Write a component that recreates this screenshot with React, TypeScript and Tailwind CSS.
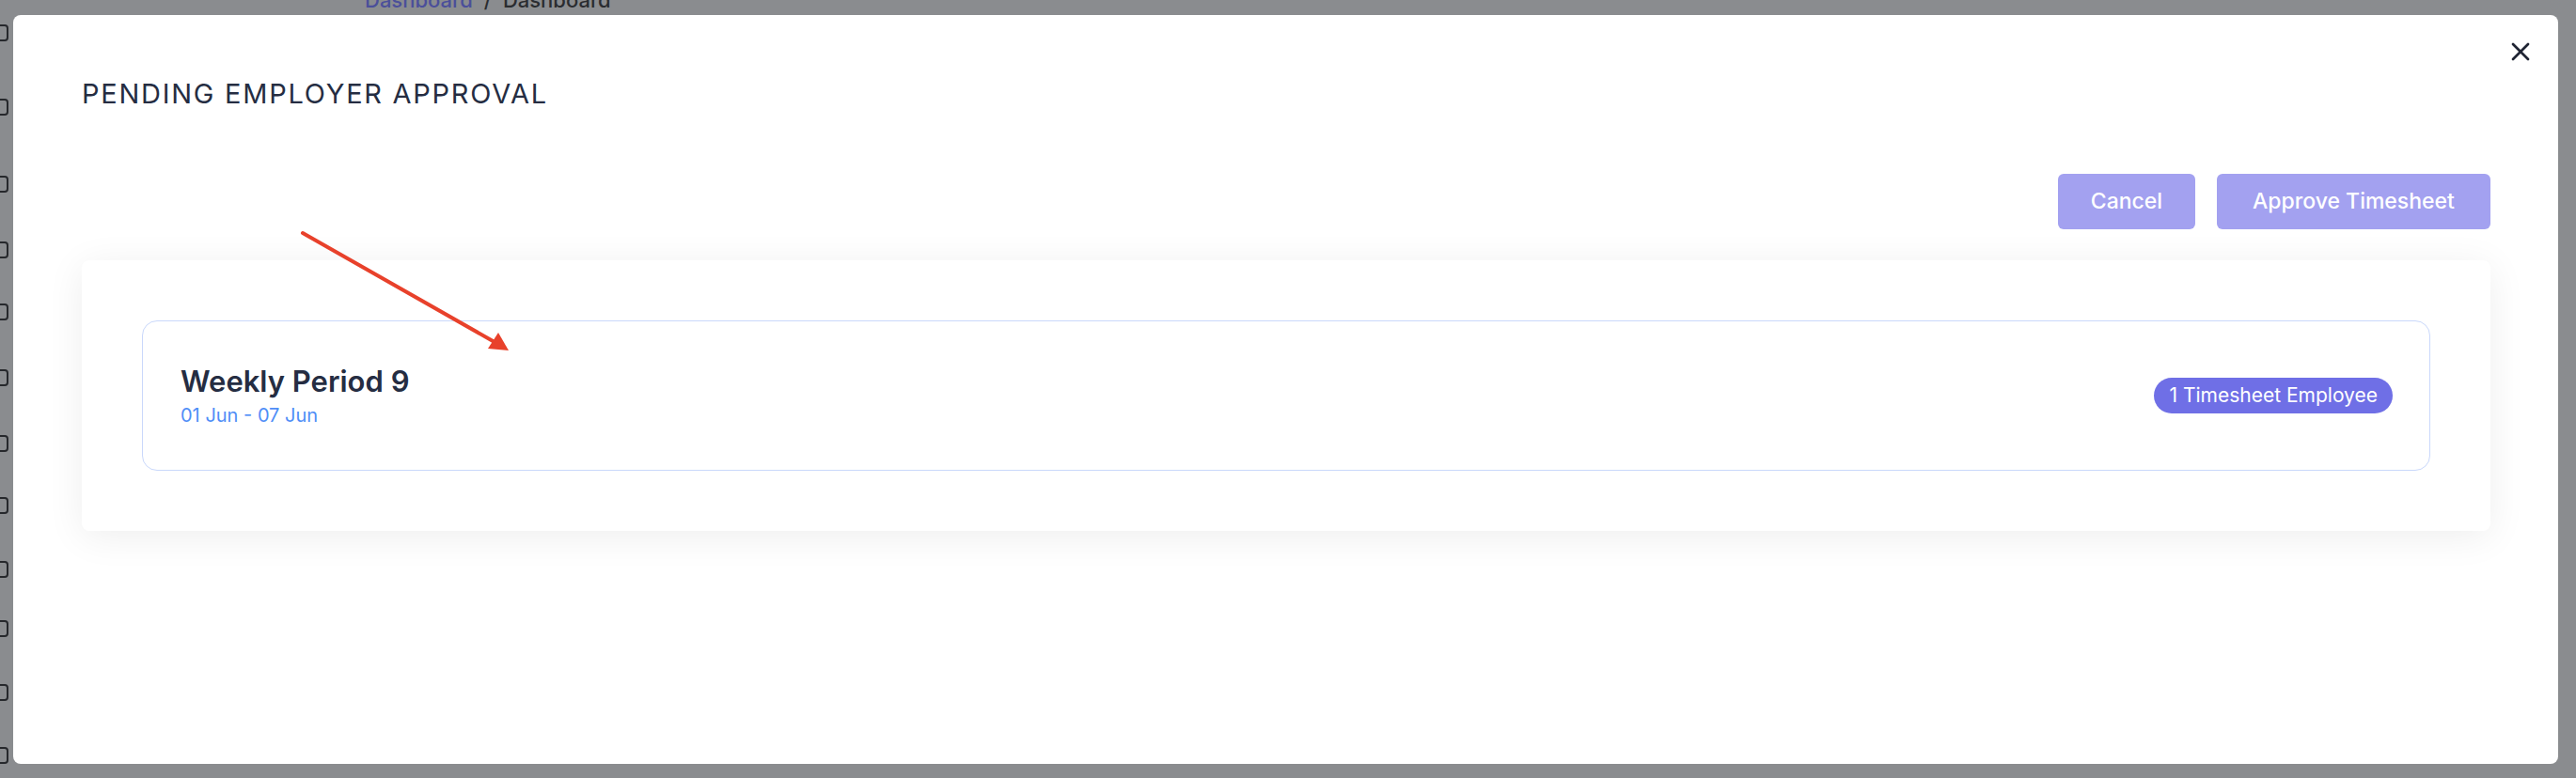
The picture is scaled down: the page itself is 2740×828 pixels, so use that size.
import { X } from 'lucide-react'

const sidebarIcons = [35, 114, 196, 266, 332, 402, 472, 538, 606, 669, 737, 804]

function Backdrop() {
    // page behind the dialog, dimmed by the overlay
    return (
        <div className="absolute inset-0 bg-[#8a8c8f] overflow-hidden">
            <div className="absolute left-0 top-0 h-full w-[10px]">
                {sidebarIcons.map((y) => (
                    <div
                        key={y}
                        className="absolute left-[-9px] w-[18px] h-[18px] rounded-[4px] border-[2px] border-[#26282c]"
                        style={{ top: y - 9 }}
                    />
                ))}
            </div>
            <div className="absolute left-[388px] top-[-16px] flex gap-3 text-[22px] font-medium">
                <span className="text-[#4b4f9a]">Dashboard</span>
                <span className="text-[#2a2c30]">/</span>
                <span className="text-[#2a2c30]">Dashboard</span>
            </div>
        </div>
    )
}

function Arrow() {
    return (
        <svg
            className="absolute left-0 top-0 pointer-events-none"
            width="700"
            height="450"
            viewBox="0 0 700 450"
        >
            <line x1="322" y1="248" x2="526" y2="364" stroke="#e8412b" strokeWidth="4" strokeLinecap="round" />
            <polygon points="541,373 519,371 530,354" fill="#e8412b" />
        </svg>
    )
}

function PeriodCard() {
    return (
        <div className="flex items-center justify-between h-[160px] rounded-[16px] border border-[#c9d8fb] pl-[40px] pr-[39px]">
            <div className="flex flex-col">
                <span className="text-[31px] leading-[38px] font-semibold text-[#252d42]">
                    Weekly Period 9
                </span>
                <span className="mt-[4px] text-[20px] leading-[26px] text-[#4f8ef7]">
                    01 Jun - 07 Jun
                </span>
            </div>
            <span className="h-[38px] flex items-center rounded-full bg-[#6f6fe6] px-[16px] text-[21px] text-white">
                1 Timesheet Employee
            </span>
        </div>
    )
}

export default function App() {
    return (
        <div
            className="relative w-[2740px] h-[828px] overflow-hidden"
            style={{ fontFamily: 'Inter, "Open Sans", sans-serif' }}
        >
            <Backdrop />
            <div className="absolute left-[14px] top-[16px] w-[2707px] h-[797px] rounded-[8px] bg-white">
                <button className="absolute right-[24px] top-[23px] text-[#1f2433]">
                    <X size={32} strokeWidth={2} />
                </button>
                <div className="flex flex-col pt-[66px] pl-[73px] pr-[72px]">
                    <h2 className="h-[35px] text-[29px] leading-[35px] tracking-[0.06em] text-[#252d42]">
                        PENDING EMPLOYER APPROVAL
                    </h2>
                    <div className="flex justify-end gap-[23px] mt-[68px]">
                        <button className="h-[59px] w-[146px] rounded-[6px] bg-[#a3a1f0] text-[23px] font-medium text-white">
                            Cancel
                        </button>
                        <button className="h-[59px] w-[291px] rounded-[6px] bg-[#a3a1f0] text-[23px] font-medium text-white">
                            Approve Timesheet
                        </button>
                    </div>
                    <div className="mt-[33px] rounded-[8px] bg-white p-[64px] shadow-[0_6px_40px_rgba(0,0,0,0.07)]">
                        <PeriodCard />
                    </div>
                </div>
            </div>
            <Arrow />
        </div>
    )
}
